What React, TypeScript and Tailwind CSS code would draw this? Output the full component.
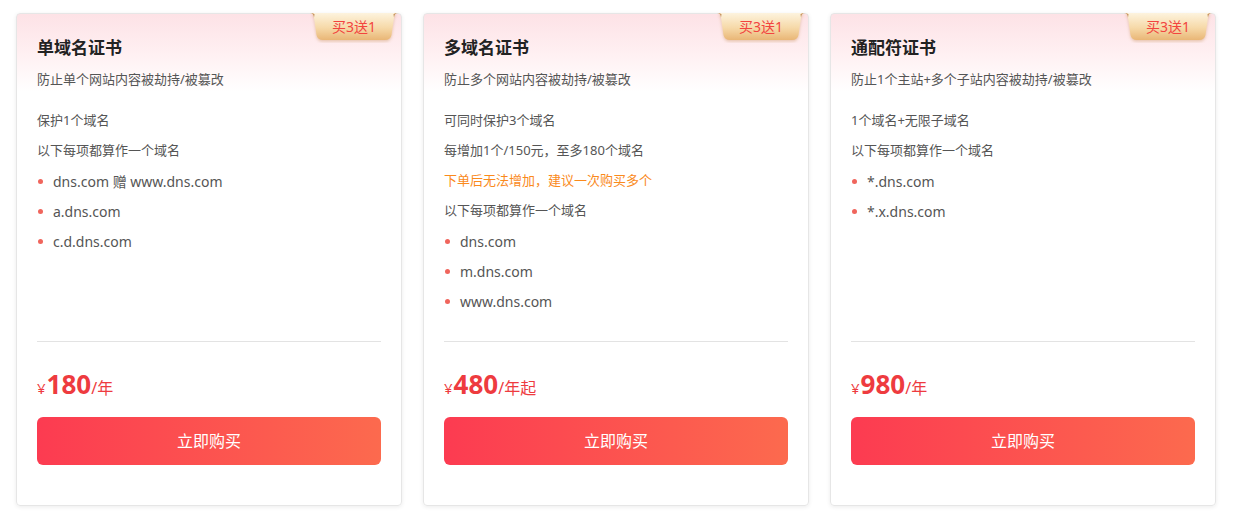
import React from "react";

type Line = { text: string; kind?: "note" | "warn" | "dot" };

const plans: {
  title: string;
  desc: string;
  lines: Line[];
  price: string;
  unit: string;
}[] = [
  {
    title: "单域名证书",
    desc: "防止单个网站内容被劫持/被篡改",
    lines: [
      { text: "保护1个域名" },
      { text: "以下每项都算作一个域名" },
      { text: "dns.com 赠 www.dns.com", kind: "dot" },
      { text: "a.dns.com", kind: "dot" },
      { text: "c.d.dns.com", kind: "dot" },
    ],
    price: "180",
    unit: "/年",
  },
  {
    title: "多域名证书",
    desc: "防止多个网站内容被劫持/被篡改",
    lines: [
      { text: "可同时保护3个域名" },
      { text: "每增加1个/150元，至多180个域名" },
      { text: "下单后无法增加，建议一次购买多个", kind: "warn" },
      { text: "以下每项都算作一个域名" },
      { text: "dns.com", kind: "dot" },
      { text: "m.dns.com", kind: "dot" },
      { text: "www.dns.com", kind: "dot" },
    ],
    price: "480",
    unit: "/年起",
  },
  {
    title: "通配符证书",
    desc: "防止1个主站+多个子站内容被劫持/被篡改",
    lines: [
      { text: "1个域名+无限子域名" },
      { text: "以下每项都算作一个域名" },
      { text: "*.dns.com", kind: "dot" },
      { text: "*.x.dns.com", kind: "dot" },
    ],
    price: "980",
    unit: "/年",
  },
];

const Badge = () => (
  <div className="absolute top-[-1px] right-[3px] w-[88px] h-[30px]">
    <svg width="88" height="30" viewBox="0 0 88 30" className="absolute inset-0">
      <defs>
        <linearGradient id="bg" x1="0" y1="0" x2="0" y2="1">
          <stop offset="0" stopColor="#fdf3de" />
          <stop offset="0.55" stopColor="#f6d9a8" />
          <stop offset="1" stopColor="#e9b676" />
        </linearGradient>
        <filter id="sh" x="-10%" y="-10%" width="120%" height="140%">
          <feDropShadow dx="0" dy="1.5" stdDeviation="1.5" floodColor="#c98f5a" floodOpacity="0.45" />
        </filter>
      </defs>
      <path
        d="M0 0 H88 C85.5 0 84.5 2 84 4.5 L81.5 22 Q80.5 27 75 27 H13 Q7.5 27 6.5 22 L4 4.5 C3.5 2 2.5 0 0 0 Z"
        fill="url(#bg)"
        filter="url(#sh)"
      />
      <path d="M0 0 C2.5 0 3.5 2 4 4.5 L4.6 1.2 C3.8 0.3 2 0 0 0 Z" fill="#c99660" />
      <path d="M88 0 C85.5 0 84.5 2 84 4.5 L83.4 1.2 C84.2 0.3 86 0 88 0 Z" fill="#c99660" />
    </svg>
    <span className="absolute inset-x-0 top-[4px] text-center text-[14px] leading-[20px] text-[#f2443f]">
      买3送1
    </span>
  </div>
);

const Card = ({ plan }: { plan: (typeof plans)[number] }) => (
  <div className="relative w-[386px] h-[493px] shrink-0 rounded-[4px] border border-[#e6e6e6] shadow-[0_1px_4px_rgba(0,0,0,0.08)] bg-[linear-gradient(180deg,#fde2e6_0px,#fff0f2_40px,#ffffff_78px)] px-[20px] flex flex-col">
    <Badge />
    <h3 className="mt-[22px] text-[17px] leading-[24px] font-bold text-[#222]">{plan.title}</h3>
    <p className="mt-[9px] text-[13px] leading-[20px] text-[#555]">{plan.desc}</p>
    <ul className="mt-[17px] h-[235px]">
      {plan.lines.map((l, i) => (
        <li
          key={i}
          className={
            l.kind === "dot"
              ? "flex items-center h-[30px] text-[14px] text-[#555]"
              : l.kind === "warn"
              ? "flex items-center h-[30px] text-[13px] text-[#fa8a1c]"
              : "flex items-center h-[30px] text-[13px] text-[#555]"
          }
        >
          {l.kind === "dot" && (
            <span className="ml-[1px] mr-[10px] w-[5px] h-[5px] rounded-full bg-[#f0655c]" />
          )}
          {l.text}
        </li>
      ))}
    </ul>
    <div className="h-px bg-[#e3e3e3]" />
    <div className="mt-[24px] h-[36px] flex items-baseline text-[#ee3b3f]">
      <span className="text-[15px]">¥</span>
      <span className="text-[26px] font-bold leading-[36px] ml-[1px]">{plan.price}</span>
      <span className="text-[16px]">{plan.unit}</span>
    </div>
    <button className="mt-[15px] h-[48px] w-full rounded-[6px] bg-[linear-gradient(90deg,#fc3b51,#fc6a4e)] text-white text-[16px]">
      立即购买
    </button>
  </div>
);

export default function App() {
  return (
    <div
      className="w-[1237px] h-[521px] bg-white pl-[16px] pt-[13px] flex gap-[21px]"
      style={{ fontFamily: '"Noto Sans", "Noto Sans CJK SC", sans-serif' }}
    >
      {plans.map((p) => (
        <Card key={p.title} plan={p} />
      ))}
    </div>
  );
}
